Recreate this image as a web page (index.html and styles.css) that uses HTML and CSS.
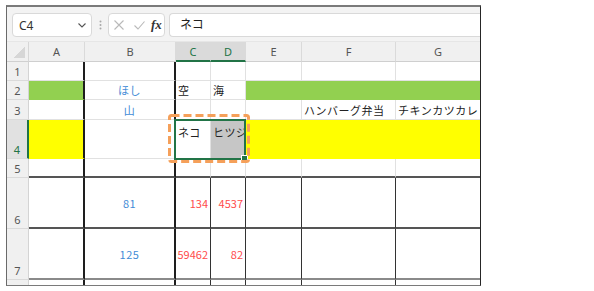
FILE: index.html
```html
<!DOCTYPE html>
<html lang="ja">
<head>
  <meta charset="UTF-8">
  <meta name="viewport" content="width=device-width, initial-scale=1.0">
  <title>Excel - セル範囲のコピー</title>
  <link rel="stylesheet" href="styles.css">
</head>
<body>
  <div class="window">
    <!-- 名前ボックスと数式バー -->
    <div class="toolbar">
      <div class="namebox">
        <span>C4</span>
        <svg class="chev" width="8" height="5" viewBox="0 0 8 5"><path d="M0.5 0.5 L4 4 L7.5 0.5" fill="none" stroke="#555" stroke-width="1.1"/></svg>
      </div>
      <div class="grip">
        <svg width="3" height="10" viewBox="0 0 3 10"><circle cx="1.5" cy="1.5" r="1" fill="#a8a8a8"/><circle cx="1.5" cy="5" r="1" fill="#a8a8a8"/><circle cx="1.5" cy="8.5" r="1" fill="#a8a8a8"/></svg>
      </div>
      <div class="fxbox">
        <svg width="10" height="10" viewBox="0 0 10 10"><path d="M0.5 0.5 L9.5 9.5 M9.5 0.5 L0.5 9.5" stroke="#b9b9b9" stroke-width="1.1"/></svg>
        <svg width="11" height="9" viewBox="0 0 11 9"><path d="M0.5 4.5 L4 8 L10.5 0.5" fill="none" stroke="#b9b9b9" stroke-width="1.1"/></svg>
        <span class="fx">fx</span>
      </div>
      <div class="formula">ネコ</div>
    </div>

    <div class="sheet">
      <div class="grid">
        <!-- 列見出し -->
        <div class="corner"><span class="tri"></span></div>
        <div class="ch">A</div>
        <div class="ch">B</div>
        <div class="ch on">C</div>
        <div class="ch on">D</div>
        <div class="ch">E</div>
        <div class="ch">F</div>
        <div class="ch">G</div>

        <!-- 1 -->
        <div class="rh">1</div>
        <div class="c thick"></div>
        <div class="c thick"></div>
        <div class="c"></div>
        <div class="c"></div>
        <div class="c"></div>
        <div class="c"></div>
        <div class="c"></div>

        <!-- 2 -->
        <div class="rh">2</div>
        <div class="c thick lime"></div>
        <div class="c thick blue mid">ほし</div>
        <div class="c">空</div>
        <div class="c">海</div>
        <div class="c lime"></div>
        <div class="c lime"></div>
        <div class="c lime"></div>

        <!-- 3 -->
        <div class="rh">3</div>
        <div class="c thick"></div>
        <div class="c thick blue mid">山</div>
        <div class="c"></div>
        <div class="c"></div>
        <div class="c"></div>
        <div class="c wide">ハンバーグ弁当</div>
        <div class="c wide">チキンカツカレ</div>

        <!-- 4 -->
        <div class="rh on">4</div>
        <div class="c thick yellow"></div>
        <div class="c thick"></div>
        <div class="c top wide">ネコ</div>
        <div class="c top wide shade">ヒツジ</div>
        <div class="c yellow"></div>
        <div class="c yellow"></div>
        <div class="c yellow"></div>

        <!-- 5 -->
        <div class="rh">5</div>
        <div class="c thick rule"></div>
        <div class="c thick rule"></div>
        <div class="c rule"></div>
        <div class="c rule"></div>
        <div class="c rule"></div>
        <div class="c rule"></div>
        <div class="c rule"></div>

        <!-- 6 -->
        <div class="rh">6</div>
        <div class="c thick rule"></div>
        <div class="c thick rule blue mid">81</div>
        <div class="c box rule red num">134</div>
        <div class="c box rule red num">4537</div>
        <div class="c box rule"></div>
        <div class="c box rule"></div>
        <div class="c rule"></div>

        <!-- 7 -->
        <div class="rh">7</div>
        <div class="c thick last"></div>
        <div class="c thick last blue mid">125</div>
        <div class="c box last red num">59462</div>
        <div class="c box last red num">82</div>
        <div class="c box last"></div>
        <div class="c box last"></div>
        <div class="c last"></div>

        <!-- 下端 -->
        <div class="rh stub"></div>
        <div class="c thick stub"></div>
        <div class="c thick stub"></div>
        <div class="c box stub"></div>
        <div class="c box stub"></div>
        <div class="c box stub"></div>
        <div class="c box stub"></div>
        <div class="c stub"></div>
      </div>

      <!-- 選択範囲とコピー枠 -->
      <div class="selection"><span class="handle"></span></div>
      <svg class="marquee" width="82" height="49" viewBox="0 0 82 49">
        <rect x="1.5" y="1.5" width="79" height="46" rx="2" fill="none" stroke="#f5a05a" stroke-width="3" stroke-dasharray="8 4"/>
      </svg>
    </div>
  </div>
</body>
</html>
```

FILE: styles.css
```css
body {
  margin: 0;
  background: #fff;
  font-family: "Noto Sans", "Noto Sans CJK JP", sans-serif;
}
.window {
  width: 473px;
  margin: 5px 0 0 6px;
  border-left: 1px solid #6a6a6a;
  border-top: 2px solid #7a7a7a;
  border-right: 1px solid #262626;
  border-bottom: 1px solid #7a7a7a;
}

/* toolbar */
.toolbar {
  height: 35px;
  box-sizing: border-box;
  background: #f3f3f3;
  display: flex;
  align-items: flex-start;
  padding: 6px 0 0 5px;
  border-bottom: 1px solid #e6e6e6;
}
.namebox {
  width: 80px;
  height: 24px;
  box-sizing: border-box;
  background: #fff;
  border: 1px solid #d9d9d9;
  border-radius: 4px;
  display: flex;
  align-items: center;
  justify-content: space-between;
  padding: 0 5px 0 6px;
  font-size: 12px;
  color: #333;
}
.grip {
  width: 16px;
  height: 24px;
  display: flex;
  align-items: center;
  justify-content: center;
}
.fxbox {
  width: 57px;
  height: 24px;
  box-sizing: border-box;
  background: #fff;
  border: 1px solid #d9d9d9;
  border-radius: 4px;
  display: flex;
  align-items: center;
  gap: 10px;
  padding-left: 5px;
}
.fx {
  font-family: "Liberation Serif", serif;
  font-style: italic;
  font-weight: bold;
  font-size: 13px;
  color: #333;
  margin-left: -4px;
}
.formula {
  flex: 1;
  height: 24px;
  box-sizing: border-box;
  margin-left: 4px;
  background: #fff;
  border: 1px solid #d9d9d9;
  border-right: none;
  border-radius: 4px 0 0 4px;
  padding-left: 10px;
  font-size: 12px;
  line-height: 22px;
  color: #222;
}

/* sheet */
.sheet { position: relative; }
.grid {
  display: grid;
  grid-template-columns: 22px 56px 91px 35px 35px 56px 94px 84px;
  grid-template-rows: 20px 19px 19px 20px 39px 19px 51px 51px 5px;
  font-family: "Noto Sans CJK JP", sans-serif;
  font-size: 11px;
}
.grid > div {
  box-sizing: border-box;
  overflow: hidden;
  white-space: nowrap;
  display: flex;
  align-items: center;
}
.grid > div:nth-child(8n) { border-right: none; }

.corner {
  background: #f0f0f0;
  border-right: 1px solid #d6d6d6;
  border-bottom: 1px solid #d0d0d0;
  justify-content: flex-end;
  align-items: flex-end !important;
  padding: 0 3px 3px 0;
}
.tri {
  width: 11px;
  height: 11px;
  background: linear-gradient(to top left, #d6d6d6 50%, transparent 50%);
}
.ch {
  background: #f0f0f0;
  border-right: 1px solid #dadada;
  border-bottom: 1px solid #cfcfcf;
  justify-content: center;
  font-family: "Noto Sans", sans-serif;
  font-size: 11px;
  color: #555;
}
.ch.on {
  background: #dadada;
  color: #217346;
  border-bottom: 2px solid #217346;
}
.rh {
  background: #f0f0f0;
  border-right: 1px solid #d4d4d4;
  border-bottom: 1px solid #dadada;
  justify-content: center;
  align-items: flex-end !important;
  padding-bottom: 1px;
  font-family: "Noto Sans", sans-serif;
  font-size: 11px;
  color: #555;
}
.rh.on {
  background: #e1e1e1;
  color: #217346;
  border-right: 2px solid #217346;
}
.rh.stub { border-bottom: none; }

.c {
  border-right: 1px solid #e1e1e1;
  border-bottom: 1px solid #e1e1e1;
  padding: 0 2px;
  color: #222;
  letter-spacing: 0.5px;
}
.c.thick { border-right: 2px solid #1e1e1e; }
.c.box { border-right: 1px solid #333; }
.c.rule { border-bottom: 2px solid #555; }
.c.last { border-bottom: 2px solid #8a8a8a; }
.c.stub { border-bottom: none; }

.lime { background: #92d050; border-color: #92d050; }
.yellow { background: #ffff00; border-color: #ffff00; }
.shade { background: #c6c6c6; }
.c.thick.lime, .c.thick.yellow { border-right-color: #1e1e1e; }

.mid { justify-content: center; }
.num { justify-content: flex-end; letter-spacing: 0; }
.top { align-items: flex-start !important; padding-top: 4px; }
.blue { color: #3f8bd6; }
.red { color: #ff4b4b; }

.selection {
  position: absolute;
  left: 167px;
  top: 77px;
  width: 72px;
  height: 41px;
  box-sizing: border-box;
  border: 2px solid #227447;
}
.handle {
  position: absolute;
  right: -4px;
  bottom: -4px;
  width: 5px;
  height: 5px;
  background: #227447;
  border: 1px solid #fff;
}
.marquee {
  position: absolute;
  left: 161px;
  top: 72px;
}
```
